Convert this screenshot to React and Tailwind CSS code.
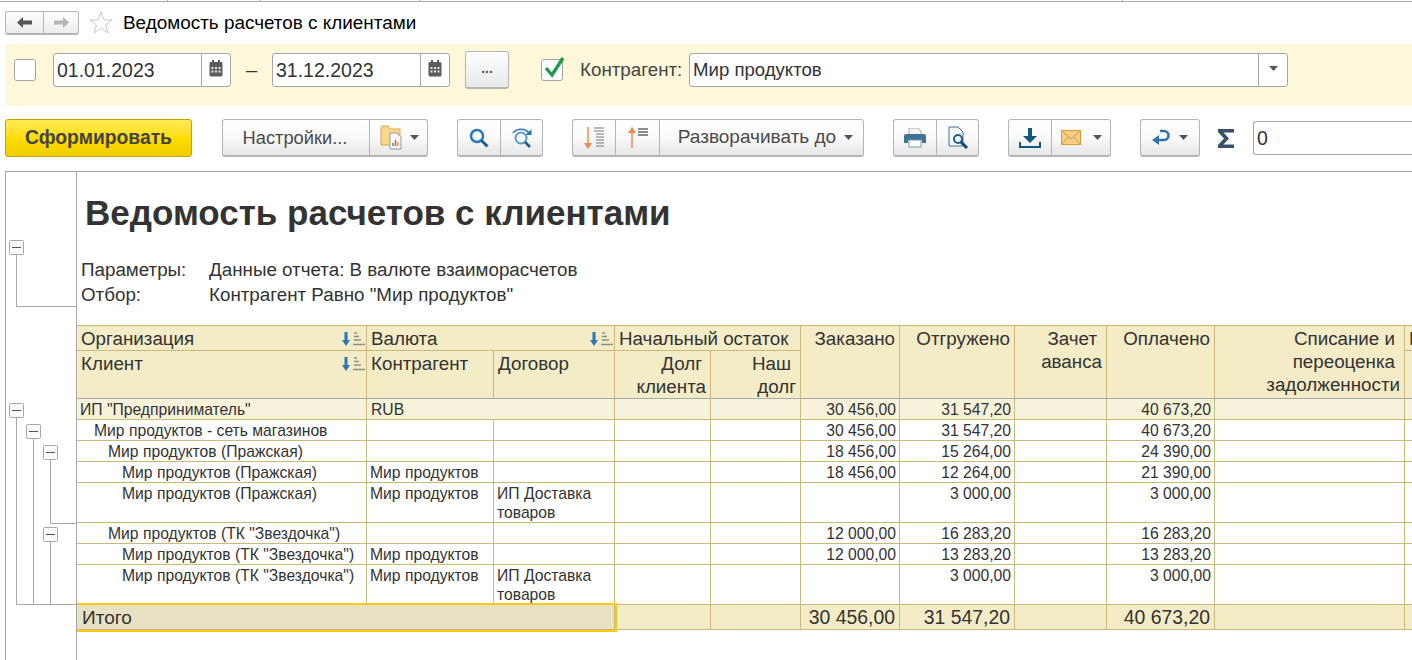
import React from 'react';

const Btn = ({ className = '', children }) => (
  <div className={`flex items-center justify-center border-r border-[#b4b4b4] last:border-r-0 h-full ${className}`}>{children}</div>
);

const Group = ({ w, children }) => (
  <div className={`flex h-[38px] ${w} rounded-[3px] border border-[#b4b4b4] border-b-2 bg-gradient-to-b from-white via-[#fafafa] to-[#e6e6e6] text-[#4a4a4a]`}>
    {children}
  </div>
);

const Caret = () => (
  <svg width="9" height="5" viewBox="0 0 9 5"><path d="M0 0h9L4.5 5z" fill="#555" /></svg>
);

const Calendar = () => (
  <svg width="14" height="17" viewBox="0 0 14 17">
    <rect x="0.5" y="2" width="13" height="14.5" rx="1.5" fill="#5c5c5c" />
    <rect x="3" y="0" width="2" height="3.5" fill="#5c5c5c" />
    <rect x="9" y="0" width="2" height="3.5" fill="#5c5c5c" />
    <g fill="#e4e4e4">
      <rect x="2.5" y="7" width="2" height="2" /><rect x="6" y="7" width="2" height="2" /><rect x="9.5" y="7" width="2" height="2" />
      <rect x="2.5" y="10.5" width="2" height="2" /><rect x="6" y="10.5" width="2" height="2" /><rect x="9.5" y="10.5" width="2" height="2" />
    </g>
  </svg>
);

const DateField = ({ value }) => (
  <div className="flex h-[34px] w-[178px] rounded-[3px] border border-[#a6a6a6] bg-white">
    <div className="flex-1 pl-[3px] text-[19.5px] leading-[32px] text-[#333]">{value}</div>
    <div className="flex w-[29px] items-center justify-center border-l border-[#a6a6a6] pb-[3px]"><Calendar /></div>
  </div>
);

const Check = ({ on }) => (
  <div className="relative h-[22px] w-[22px] rounded-[3px] border border-[#a6a6a6] bg-white">
    {on && (
      <svg className="absolute left-[2px] top-[-5px]" width="22" height="24" viewBox="0 0 22 24">
        <path d="M2 13l6 7L19 3" fill="none" stroke="#1f9a4b" strokeWidth="3.4" />
      </svg>
    )}
  </div>
);

const SortMark = () => (
  <svg className="shrink-0" width="24" height="16" viewBox="0 0 24 16">
    <path d="M2.500 1h3v8h2.500l-4 6-4-6h2.500z" fill="#2a78b5" />
    <path d="M12 2h3M12 5.500h5M12 9h7M11 13.500h12" stroke="#8f8f80" strokeWidth="1.300" />
  </svg>
);

const Minus = ({ x, y }) => (
  <g>
    <rect x={x + 0.5} y={y + 0.5} width="14" height="14" rx="1" fill="#fafafa" stroke="#a8a8a8" />
    <path d={`M${x + 3} ${y + 7.5}h9`} stroke="#555" />
  </g>
);

const Outline = () => (
  <svg className="block" width="70" height="488" viewBox="0 0 70 488">
    <g fill="none" stroke="#a8a8a8">
      <path d="M10.500 76V134.500H70" />
      <path d="M10.500 246V432.500H70" />
      <path d="M27.500 260V432.500" />
      <path d="M44.500 280V351.500H70" />
      <path d="M44.500 360V432.500" />
    </g>
    <Minus x={3} y={68} />
    <Minus x={3} y={231} />
    <Minus x={20} y={252} />
    <Minus x={37} y={273} />
    <Minus x={37} y={355} />
  </svg>
);

const line = 'border border-[#c9ba7c]';
const th = `${line} bg-[#f4ecc6] pl-[4px] pr-[4px] pt-[1px] align-top font-normal text-[18.8px] leading-[23px] text-[#333]`;
const low = 'border-b-[#a8a8a8]';
const thr = `${th} ${low} text-right`;

const rows = [
  { name: 'ИП "Предприниматель"', pad: 'pl-[3px]', cur: 'RUB', a: '30 456,00', b: '31 547,20', c: '40 673,20', top: true, h: 'h-[21px]' },
  { name: 'Мир продуктов - сеть магазинов', pad: 'pl-[17px]', a: '30 456,00', b: '31 547,20', c: '40 673,20', h: 'h-[21px]' },
  { name: 'Мир продуктов (Пражская)', pad: 'pl-[31px]', a: '18 456,00', b: '15 264,00', c: '24 390,00', h: 'h-[21px]' },
  { name: 'Мир продуктов (Пражская)', pad: 'pl-[45px]', cur: 'Мир продуктов', a: '18 456,00', b: '12 264,00', c: '21 390,00', h: 'h-[21px]' },
  { name: 'Мир продуктов (Пражская)', pad: 'pl-[45px]', cur: 'Мир продуктов', dog: true, b: '3 000,00', c: '3 000,00', h: 'h-[40px]' },
  { name: 'Мир продуктов (ТК "Звездочка")', pad: 'pl-[31px]', a: '12 000,00', b: '16 283,20', c: '16 283,20', h: 'h-[21px]' },
  { name: 'Мир продуктов (ТК "Звездочка")', pad: 'pl-[45px]', cur: 'Мир продуктов', a: '12 000,00', b: '13 283,20', c: '13 283,20', h: 'h-[21px]' },
  { name: 'Мир продуктов (ТК "Звездочка")', pad: 'pl-[45px]', cur: 'Мир продуктов', dog: true, b: '3 000,00', c: '3 000,00', h: 'h-[40px]' },
];

const App = () => {
  return (
    <div className="h-[660px] w-[1412px] overflow-hidden bg-white font-['Liberation_Sans',Arial,sans-serif] text-[#333]">
      {/* tab strip edge */}
      <div className="flex h-[2px] border-b border-[#a8a8a8]">
        <div className="w-[168px] border-r border-[#a8a8a8]" />
        <div className="w-[93px] border-r border-[#a8a8a8]" />
        <div className="w-[159px] border-r border-[#a8a8a8]" />
        <div className="w-[703px] border-r border-[#a8a8a8]" />
      </div>

      {/* title */}
      <div className="flex h-[42px] items-start pl-[5px] pt-[9px]">
        <div className="flex h-[24px] w-[74px] rounded-[3px] border border-[#b4b4b4] border-b-2 bg-gradient-to-b from-white to-[#ececec]">
          <Btn className="w-[38px]">
            <svg width="15" height="11" viewBox="0 0 15 11"><path d="M0 5.500L6 0v3.500h9v4H6V11z" fill="#555" /></svg>
          </Btn>
          <Btn className="flex-1">
            <svg width="15" height="11" viewBox="0 0 15 11"><path d="M15 5.500L9 0v3.500H0v4h9V11z" fill="#b5b5b5" /></svg>
          </Btn>
        </div>
        <svg className="ml-[10px]" width="24" height="23" viewBox="0 0 24 23">
          <path d="M12 1l3 8h8l-6.500 5 2.500 8-7-5-7 5 2.500-8L1 9h8z" fill="#fff" stroke="#c8c8c8" />
        </svg>
        <div className="ml-[10px] text-[18.9px] leading-[24px] text-black">Ведомость расчетов с клиентами</div>
      </div>

      {/* filter band */}
      <div className="ml-[5px] flex h-[62px] items-center bg-[#fef8da] pb-[10px]">
        <div className="ml-[9px]"><Check /></div>
        <div className="ml-[17px]"><DateField value="01.01.2023" /></div>
        <div className="w-[41px] text-center text-[20px] text-[#333]">–</div>
        <DateField value="31.12.2023" />
        <div className="ml-[15px] h-[38px] w-[44px] rounded-[3px] border border-[#b4b4b4] border-b-2 bg-gradient-to-b from-white to-[#e8e8e8] pt-[4px] text-center text-[14px] font-bold leading-[24px] text-[#555]">...</div>
        <div className="ml-[32px]"><Check on /></div>
        <div className="ml-[17px] w-[109px] text-[18.8px] text-[#444]">Контрагент:</div>
        <div className="flex h-[34px] w-[599px] rounded-[3px] border border-[#a6a6a6] bg-white">
          <div className="flex-1 pl-[3px] text-[18.6px] leading-[32px] text-[#333]">Мир продуктов</div>
          <div className="flex w-[29px] items-center justify-center border-l border-[#a6a6a6] pb-[3px]"><Caret /></div>
        </div>
      </div>

      {/* command bar */}
      <div className="ml-[5px] mt-[13px] flex h-[38px] items-center">
        <div className="flex h-[38px] w-[187px] items-center justify-center rounded-[3px] border border-[#c4a300] bg-gradient-to-b from-[#ffeb4f] via-[#ffdd00] to-[#efcb00] text-[19.3px] font-bold text-[#444]">Сформировать</div>
        <div className="ml-[30px]">
          <Group w="w-[206px]">
            <Btn className="w-[147px] pr-[2px] text-[18.3px]">Настройки...</Btn>
            <Btn className="flex-1 gap-[6px] pl-[2px]">
              <svg width="24" height="26" viewBox="0 0 24 26">
                <path d="M1 8V3Q1 1 3 1H8L10 4H20V20H1z" fill="#f7d88c" stroke="#dba64e" />
                <path d="M10 8h7l4 4v12H10z" fill="#fafafa" stroke="#9a9a9a" />
                <path d="M13 21v-3" stroke="#3f9a4e" strokeWidth="1.500" /><path d="M15.500 21v-6" stroke="#d9534a" strokeWidth="1.500" /><path d="M18 21v-4" stroke="#e59a2f" strokeWidth="1.500" />
              </svg>
              <Caret />
            </Btn>
          </Group>
        </div>
        <div className="ml-[29px]">
          <Group w="w-[86px]">
            <Btn className="w-[43px]">
              <svg width="20" height="20" viewBox="0 0 20 20"><circle cx="8" cy="8" r="6" fill="none" stroke="#2a78b5" strokeWidth="2.500" /><path d="M12.500 12.500L18.500 18.500" stroke="#1f5f90" strokeWidth="3" /></svg>
            </Btn>
            <Btn className="flex-1">
              <svg width="22" height="22" viewBox="0 0 22 22">
                <circle cx="10" cy="11" r="5.500" fill="none" stroke="#5d9cc4" strokeWidth="2" />
                <path d="M14 15l5 5" stroke="#1f5f90" strokeWidth="2.800" />
                <path d="M2 6C6 1 14 1 18 6" fill="none" stroke="#2a78b5" strokeWidth="1.600" />
                <path d="M20.500 2v6h-6z" fill="#2a78b5" />
              </svg>
            </Btn>
          </Group>
        </div>
        <div className="ml-[29px]">
          <Group w="w-[292px]">
            <Btn className="w-[43px]">
              <svg width="22" height="24" viewBox="0 0 22 24">
                <path d="M5 1v19" stroke="#ef8a4f" strokeWidth="1.500" /><path d="M1 17l4 6 4-6z" fill="#ef8a4f" />
                <path d="M11 2h10M11 5h10M13 8h8M13 11h8M13 14h8M13 17h8M13 20h8" stroke="#777" strokeWidth="1.200" />
              </svg>
            </Btn>
            <Btn className="w-[44px]">
              <svg width="22" height="24" viewBox="0 0 22 24">
                <path d="M5 22V4" stroke="#ef8a4f" strokeWidth="1.500" /><path d="M1 7l4-6 4 6z" fill="#ef8a4f" />
                <path d="M11 3h10M11 6h10M11 9h10" stroke="#666" strokeWidth="1.300" />
              </svg>
            </Btn>
            <Btn className="flex-1 gap-[8px] pl-[8px] text-[19px]">Разворачивать до <Caret /></Btn>
          </Group>
        </div>
        <div className="ml-[29px]">
          <Group w="w-[86px]">
            <Btn className="w-[43px]">
              <svg width="22" height="20" viewBox="0 0 22 20">
                <path d="M5 0h9l3 3v4H5z" fill="#f4f4f4" stroke="#999" strokeWidth="0.800" />
                <path d="M0 8q0-2 2-2h18q2 0 2 2v7h-4v-3H4v3H0z" fill="#3d7299" />
                <rect x="5" y="12" width="12" height="7" fill="#fff" stroke="#7a9bb3" />
              </svg>
            </Btn>
            <Btn className="flex-1">
              <svg width="22" height="23" viewBox="0 0 22 23">
                <path d="M2 1h9l5 5v14H2z" fill="#f8f8f8" stroke="#3d7299" />
                <circle cx="11" cy="13" r="4" fill="none" stroke="#1f5f90" strokeWidth="2" />
                <path d="M14 16l6 6" stroke="#14466e" strokeWidth="3" />
              </svg>
            </Btn>
          </Group>
        </div>
        <div className="ml-[29px]">
          <Group w="w-[103px]">
            <Btn className="w-[43px]">
              <svg width="22" height="20" viewBox="0 0 22 20">
                <path d="M9 0h4v8h5l-7 7-7-7h5z" fill="#14587f" />
                <path d="M1 14v5h20v-5" fill="none" stroke="#14587f" strokeWidth="2" />
              </svg>
            </Btn>
            <Btn className="flex-1 gap-[12px]">
              <svg width="20" height="15" viewBox="0 0 20 15">
                <rect x="0.500" y="0.500" width="19" height="14" fill="#f6cd85" stroke="#d99a3f" />
                <path d="M1 1l9 8 9-8M1 14l6-7M19 14l-6-7" fill="none" stroke="#d99a3f" />
              </svg>
              <Caret />
            </Btn>
          </Group>
        </div>
        <div className="ml-[29px]">
          <Group w="w-[60px]">
            <Btn className="flex-1 gap-[8px]">
              <svg width="19" height="17" viewBox="0 0 19 17">
                <path d="M7 6L0 11l7 5z" fill="#2f74a8" />
                <path d="M6 11H12A4.500 4.500 0 0 0 12 2H8" fill="none" stroke="#2f74a8" strokeWidth="2.600" />
              </svg>
              <Caret />
            </Btn>
          </Group>
        </div>
        <svg className="ml-[17px]" width="18" height="21" viewBox="0 0 18 21">
          <path d="M1 1h16v3.500H6.500l5.500 6-5.500 6H17V20H1v-3l6-6.500L1 4z" fill="#3a5068" />
        </svg>
        <div className="ml-[18px] h-[34px] flex-1 rounded-l-[3px] border border-r-0 border-[#a6a6a6] pl-[3px] text-[19.5px] leading-[32px] text-[#333]">0</div>
      </div>

      {/* report */}
      <div className="ml-[5px] mt-[14px] flex h-[489px] border-l border-t border-[#a8a8a8]">
        <div className="w-[71px] shrink-0 border-r border-[#a8a8a8]">
          <Outline />
        </div>
        <div className="min-w-0 flex-1 overflow-hidden">
          <h1 className="pl-[8px] pt-[19px] text-[35px] font-bold leading-[44px] text-[#333]">Ведомость расчетов с клиентами</h1>
          <div className="pl-[4px] pt-[22px] text-[18.8px] leading-[25px]">
            <div className="flex"><span className="w-[128px]">Параметры:</span><span>Данные отчета: В валюте взаиморасчетов</span></div>
            <div className="flex"><span className="w-[128px]">Отбор:</span><span>Контрагент Равно "Мир продуктов"</span></div>
          </div>
          <table className="-ml-[1px] mt-[18px] w-[1340px] table-fixed border-collapse">
            <colgroup>
              <col className="w-[290px]" />
              <col className="w-[127px]" />
              <col className="w-[121px]" />
              <col className="w-[96px]" />
              <col className="w-[90px]" />
              <col className="w-[99px]" />
              <col className="w-[115px]" />
              <col className="w-[92px]" />
              <col className="w-[108px]" />
              <col className="w-[190px]" />
              <col className="w-[12px]" />
            </colgroup>
            <thead>
              <tr className="h-[25px]">
                <th className={`${th} !pr-0 text-left`}>
                  <div className="flex items-center justify-between">Организация <SortMark /></div>
                </th>
                <th colSpan={2} className={`${th} !pr-0 text-left`}>
                  <div className="flex items-center justify-between">Валюта <SortMark /></div>
                </th>
                <th colSpan={2} className={`${th} whitespace-nowrap text-left`}>Начальный остаток</th>
                <th rowSpan={2} className={thr}>Заказано</th>
                <th rowSpan={2} className={thr}>Отгружено</th>
                <th rowSpan={2} className={thr}><span className="pr-[5px]">Зачет</span><br />аванса</th>
                <th rowSpan={2} className={thr}>Оплачено</th>
                <th rowSpan={2} className={thr}><span className="pr-[5px]">Списание и</span><br /><span className="pr-[5px]">переоценка</span><br />задолженности</th>
                <th className={`${th} overflow-hidden whitespace-nowrap text-left`}>Н</th>
              </tr>
              <tr className="h-[48px]">
                <th className={`${th} ${low} !pr-0 text-left`}>
                  <div className="flex items-center justify-between">Клиент <SortMark /></div>
                </th>
                <th className={`${th} ${low} text-left`}>Контрагент</th>
                <th className={`${th} ${low} text-left`}>Договор</th>
                <th className={thr}><span className="pr-[4px]">Долг</span><br />клиента</th>
                <th className={thr}><span className="pr-[5px]">Наш</span><br />долг</th>
                <th className={`${th} ${low}`} />
              </tr>
            </thead>
            <tbody className="text-[15.7px] leading-[19px]">
              {rows.map((r, i) => {
                const td = `${line} pt-[1px] ${r.top ? 'bg-[#f7f2da]' : ''}`;
                const num = `${td} pr-[3px] text-right align-top`;
                return (
                  <tr key={i} className={r.h}>
                    <td className={`${td} ${r.pad} overflow-hidden whitespace-nowrap align-top`}>{r.name}</td>
                    {r.top ? (
                      <td colSpan={2} className={`${td} pl-[4px] align-top`}>{r.cur}</td>
                    ) : (
                      <>
                        <td className={`${td} whitespace-nowrap pl-[3px] align-top`}>{r.cur}</td>
                        <td className={`${td} pl-[3px] align-top`}>{r.dog && <>ИП Доставка<br />товаров</>}</td>
                      </>
                    )}
                    <td className={td} />
                    <td className={td} />
                    <td className={num}>{r.a}</td>
                    <td className={num}>{r.b}</td>
                    <td className={td} />
                    <td className={num}>{r.c}</td>
                    <td className={td} />
                    <td className={td} />
                  </tr>
                );
              })}
              <tr className="h-[25px] bg-[#f4ecc6] text-[19.4px] leading-[23px]">
                <td colSpan={3} className="relative border border-[#c9ba7c] bg-[#e8e2c4] pl-[5px] text-[19px] outline-2 outline-[#fbc914]">Итого</td>
                <td className={line} />
                <td className={line} />
                <td className={`${line} pr-[4px] text-right`}>30 456,00</td>
                <td className={`${line} pr-[4px] text-right`}>31 547,20</td>
                <td className={line} />
                <td className={`${line} pr-[4px] text-right`}>40 673,20</td>
                <td className={line} />
                <td className={line} />
              </tr>
            </tbody>
          </table>
        </div>
      </div>
    </div>
  );
};

export default App;
